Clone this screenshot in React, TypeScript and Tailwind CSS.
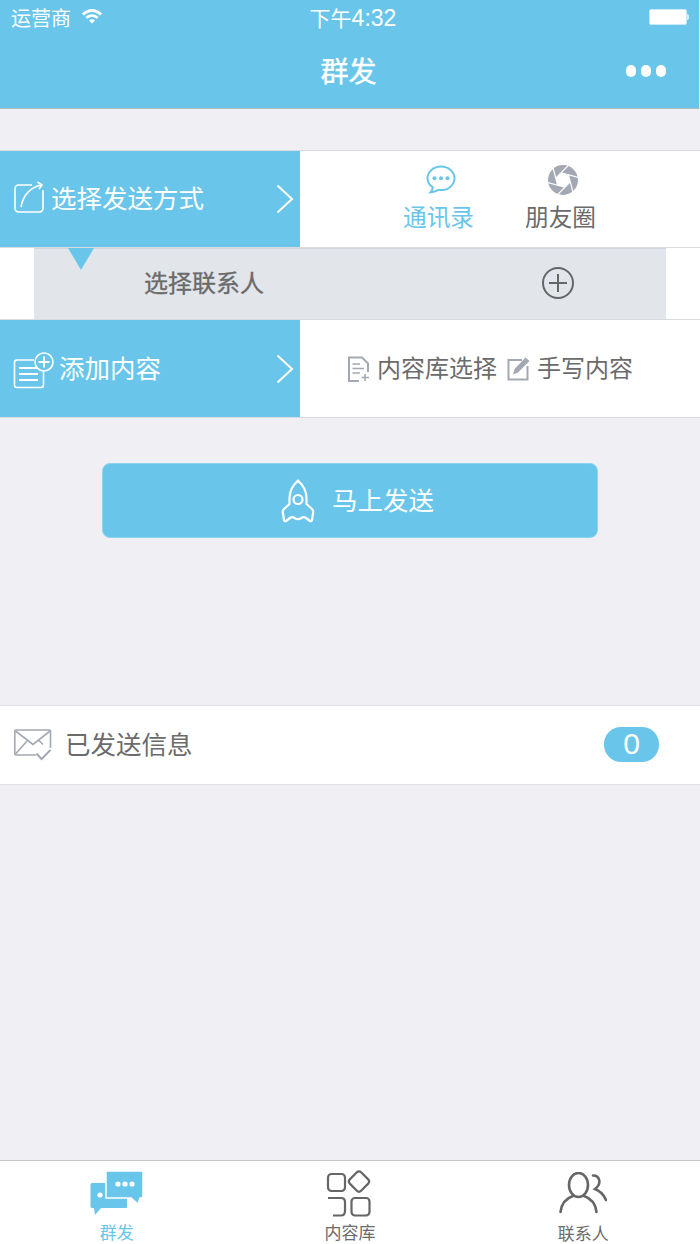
import React from 'react';

const Chevron: React.FC = () => (
    <svg width="18" height="30" viewBox="0 0 18 30" fill="none" stroke="#fff" strokeWidth="2">
        <path d="M1.5 1.5 L16 15 L1.5 28.5" />
    </svg>
);

// six blades: each white line runs along one side of the hexagonal hole and on past the rim
const Aperture: React.FC = () => {
    const points = [0, 1, 2, 3, 4, 5].map(i => {
        const angle = (i * 60 + 15) * Math.PI / 180;
        return [15 + 7.5 * Math.cos(angle), 15 + 7.5 * Math.sin(angle)];
    });
    return (
        <svg width="30" height="30" viewBox="0 0 30 30" className="shrink-0 ml-[5px]">
            <circle cx="15" cy="15" r="15" fill="#a3a9b3" />
            <polygon points={points.map(p => p.join(',')).join(' ')} fill="#fff" />
            {points.map((p, i) => {
                const next = points[(i + 1) % 6];
                const x2 = p[0] + (next[0] - p[0]) * 3.2;
                const y2 = p[1] + (next[1] - p[1]) * 3.2;
                return <line key={i} x1={p[0]} y1={p[1]} x2={x2} y2={y2} stroke="#fff" strokeWidth="1.2" />;
            })}
        </svg>
    );
};

const App: React.FC = () => {
    return (
        <div className="w-[700px] h-[1244px] flex flex-col bg-[#efeff4] overflow-hidden font-['Noto_Sans_CJK_SC','Liberation_Sans',sans-serif] text-[#6b6b6b]">
            {/* header */}
            <div className="h-[109px] shrink-0 bg-[#69c6ea] border-b border-r border-b-[#b4bcc2] border-r-[#dfe6ea] text-white flex flex-col">
                <div className="h-[36px] flex items-center justify-between pl-[11px] pr-[10px]">
                    <div className="w-[200px] flex items-center gap-[10px]">
                        <span className="text-[20px] leading-none mb-[1px]">运营商</span>
                        <svg width="22" height="16" viewBox="0 0 22 16" fill="#fff" className="mb-[4px]">
                            <path d="M1 5.5 C6.5 -0.5 15.5 -0.5 21 5.5 L19 7.5 C14.5 2.8 7.5 2.8 3 7.5 Z" />
                            <path d="M4.5 9 C8 5.2 14 5.2 17.5 9 L15.5 11 C13 8.4 9 8.4 6.5 11 Z" />
                            <path d="M8 12.5 C9.8 10.8 12.2 10.8 14 12.5 L11 15.5 Z" />
                        </svg>
                    </div>
                    <span className="text-[21px] leading-none ml-[6px]">下午<span className="text-[23px] font-['Liberation_Sans',sans-serif]">4:32</span></span>
                    <div className="w-[200px] flex justify-end items-center mb-[2px]">
                        <div className="w-[38px] h-[16px] bg-white rounded-[2px] border border-[#c5e9f7]" />
                        <div className="w-[2px] h-[6px] bg-white/70 rounded-r-sm" />
                    </div>
                </div>
                <div className="flex-1 flex items-center justify-between pl-[34px] pr-[33px] pb-[3px]">
                    <div className="w-[40px]" />
                    <span className="text-[28px] leading-none mb-[1px] mr-[3px] [-webkit-text-stroke:0.4px_white]">群发</span>
                    <div className="flex items-center gap-[5px]">
                        <div className="w-[10px] h-[12px] rounded-full bg-white" />
                        <div className="w-[10px] h-[12px] rounded-full bg-white" />
                        <div className="w-[10px] h-[12px] rounded-full bg-white" />
                    </div>
                </div>
            </div>

            {/* send method */}
            <div className="mt-[41px] h-[98px] shrink-0 flex bg-white border-t border-b border-[#d9dadd]">
                <div className="w-[300px] bg-[#69c6ea] flex items-center pl-[13px] pr-[6px] text-white">
                    <svg width="32" height="34" viewBox="0 0 32 34" fill="none" stroke="#fff" strokeWidth="1.6" className="shrink-0 mt-[-3px]">
                        <path d="M19 4 H6 Q2 4 2 8 V27 Q2 31 6 31 H26 Q30 31 30 27 V9" />
                        <path d="M8 26 C10 15 16 7 28 4" />
                        <path d="M24.5 1 L29 4 L26 8" />
                    </svg>
                    <span className="ml-[6px] text-[25.5px] leading-none mb-[4px] whitespace-nowrap">选择发送方式</span>
                    <div className="ml-auto"><Chevron /></div>
                </div>
                <div className="flex-1 flex pl-[103px] pt-[14px]">
                    <div className="w-[71px] shrink-0 flex flex-col items-center text-[#69c6ea]">
                        <svg width="30" height="29" viewBox="0 0 30 29" fill="none" className="shrink-0 ml-[5px]">
                            <path d="M15 1.5 C7.5 1.5 1.5 6.8 1.5 13.3 C1.5 17 3.5 20.2 6.8 22.4 C6.6 24.4 5.8 26 4.5 27.3 C8 27 10.6 26 12.6 24.9 C13.4 25 14.2 25.1 15 25.1 C22.5 25.1 28.5 19.8 28.5 13.3 C28.5 6.8 22.5 1.5 15 1.5 Z" stroke="#69c6ea" strokeWidth="2" />
                            <circle cx="8.5" cy="13.3" r="2" fill="#69c6ea" />
                            <circle cx="15" cy="13.3" r="2" fill="#69c6ea" />
                            <circle cx="21.5" cy="13.3" r="2" fill="#69c6ea" />
                        </svg>
                        <span className="mt-[7px] text-[23.7px] leading-[30px] whitespace-nowrap">通讯录</span>
                    </div>
                    <div className="ml-[51px] w-[71px] shrink-0 flex flex-col items-center">
                        <Aperture />
                        <span className="mt-[6px] text-[23.7px] leading-[30px] whitespace-nowrap">朋友圈</span>
                    </div>
                </div>
            </div>

            {/* contacts */}
            <div className="relative h-[72px] shrink-0 bg-white px-[34px] border-b border-[#d9dadd]">
                <div className="h-full bg-[#e2e5ea] flex items-center pl-[110px] border-t border-[#d3d6dc]">
                    <span className="text-[24px] leading-none mb-[4px] [-webkit-text-stroke:0.35px_#6b6b6b]">选择联系人</span>
                    <svg width="32" height="32" viewBox="0 0 32 32" fill="none" stroke="#666" strokeWidth="2" className="ml-[278px] mt-[-2px]">
                        <circle cx="16" cy="16" r="15" />
                        <path d="M16 7 V25 M7 16 H25" />
                    </svg>
                </div>
                <div className="absolute left-[68px] top-0 w-[26px] h-[22px] bg-[#69c6ea] [clip-path:polygon(0_0,100%_0,50%_100%)]" />
            </div>

            {/* content */}
            <div className="h-[98px] shrink-0 flex bg-white border-b border-[#d9dadd]">
                <div className="w-[300px] bg-[#69c6ea] flex items-center pl-[13px] pr-[6px] text-white">
                    <svg width="41" height="37" viewBox="0 0 41 37" fill="none" stroke="#fff" strokeWidth="1.6" className="shrink-0 mt-[3px]">
                        <path d="M21 8 H4 Q1.5 8 1.5 10.5 V33 Q1.5 35.5 4 35.5 H28 Q30.5 35.5 30.5 33 V19" />
                        <path d="M6 16 H24 M6 22 H25 M6 28 H25" strokeWidth="2" />
                        <circle cx="31" cy="10" r="9" />
                        <path d="M31 4.5 V15.5 M25.5 10 H36.5" strokeWidth="2" />
                    </svg>
                    <span className="ml-[5px] text-[25.5px] leading-none mb-[4px] whitespace-nowrap">添加内容</span>
                    <div className="ml-auto"><Chevron /></div>
                </div>
                <div className="flex-1 flex items-center pl-[47px]">
                    <svg width="23" height="26" viewBox="0 0 23 26" fill="none" stroke="#a3a9b3" strokeWidth="2" className="shrink-0">
                        <path d="M12 25 H2 V1.5 H15 L21 7.5 V16" />
                        <path d="M5.5 8 H13 M5.5 12.5 H17 M5.5 17 H13" strokeWidth="1.6" />
                        <path d="M18 18 V25 M14.5 21.5 H22" strokeWidth="1.6" />
                    </svg>
                    <span className="ml-[7px] text-[24px] leading-none mb-[4px] whitespace-nowrap">内容库选择</span>
                    <svg width="23" height="24" viewBox="0 0 23 24" fill="none" className="ml-[10px] shrink-0">
                        <path d="M15 3 H1.5 V22.5 H20.5 V9" stroke="#a3a9b3" strokeWidth="2" />
                        <path d="M18.5 0.5 L22.5 4 L11 15.5 L6 17.5 L7.5 12 Z" fill="#a3a9b3" />
                    </svg>
                    <span className="ml-[7px] text-[24px] leading-none mb-[4px] whitespace-nowrap">手写内容</span>
                </div>
            </div>

            {/* send button */}
            <div className="mt-[45px] mx-[102px] h-[75px] shrink-0 rounded-[8px] bg-[#69c6ea] border border-[#8fd4ef] flex items-center justify-center text-white">
                <svg width="34" height="44" viewBox="0 0 34 44" fill="none" stroke="#fff" strokeWidth="2.2" strokeLinejoin="round" className="mr-[17px] ml-[15px]">
                    <path d="M17 1.5 C23 7 25.5 13 25.5 19 V25 L31 30 C32 31 32.5 32 32.2 33.5 L31 41 C30.8 42.3 29.8 42.5 29 42 L25 39 C23 37.6 22 38 20.5 39 C18.5 40.2 15.5 40.2 13.5 39 C12 38 11 37.6 9 39 L5 42 C4.2 42.5 3.2 42.3 3 41 L1.8 33.5 C1.5 32 2 31 3 30 L8.5 25 V19 C8.5 13 11 7 17 1.5 Z" />
                    <circle cx="17" cy="20.5" r="4.5" />
                </svg>
                <span className="text-[25.5px] leading-none mb-[4px]">马上发送</span>
            </div>

            {/* sent messages */}
            <div className="mt-[167px] h-[80px] shrink-0 bg-white border-t border-b border-[#e2e2e6] flex items-center pl-[14px]">
                <svg width="38" height="32" viewBox="0 0 38 32" fill="none" stroke="#a3a9b3" strokeWidth="1.6" className="shrink-0">
                    <path d="M22 26 H2 Q0.8 26 0.8 25 V2 Q0.8 1 2 1 H35.5 Q36.5 1 36.5 2 V19" />
                    <path d="M1.5 2 L19 15.5 L36 2 M1.5 25 L13.5 11.5 M25 11.5 L29 15.5" />
                    <path d="M22.5 24.5 L27.5 30 L36.5 21" strokeWidth="2" />
                </svg>
                <span className="ml-[13px] text-[25.5px] leading-none mb-[4px] whitespace-nowrap">已发送信息</span>
                <div className="ml-[411px] mb-[2px] w-[55px] h-[35px] rounded-[17px] bg-[#69c6ea] text-white flex items-center justify-center pl-[1px] text-[30px] leading-none font-['Liberation_Sans',sans-serif]">0</div>
            </div>

            <div className="flex-1" />

            {/* tab bar */}
            <div className="h-[84px] shrink-0 bg-white border-t border-[#c6c6c9] grid grid-cols-3 text-[17px]">
                <div className="flex flex-col items-center text-[#69c6ea] pt-[9px]">
                    <svg width="53" height="47" viewBox="0 0 53 47" className="shrink-0">
                        <path d="M2 13 H36 Q37 13 37 14 V37 Q37 38 36 38 H11 L5 45 L4 38 H2 Q0.5 38 0.5 36.5 V14.5 Q0.5 13 2 13 Z" fill="#69c6ea" />
                        <path d="M16 1 H52 Q53 1 53 2 V27 Q53 28 52 28 H50 L48 34 L41 28 H16 Z" fill="#69c6ea" stroke="#fff" strokeWidth="1.5" />
                        <circle cx="10" cy="25" r="2.6" fill="#fff" />
                        <circle cx="28" cy="14" r="2.6" fill="#fff" />
                        <circle cx="35" cy="14" r="2.6" fill="#fff" />
                        <circle cx="42" cy="14" r="2.6" fill="#fff" />
                    </svg>
                    <span className="leading-[20px] mt-[5px]">群发</span>
                </div>
                <div className="flex flex-col items-center pt-[9px]">
                    <svg width="47" height="47" viewBox="0 0 47 47" fill="none" stroke="#666" strokeWidth="2.2" className="shrink-0 ml-[-1px]">
                        <rect x="2" y="4" width="17" height="17" rx="3.5" />
                        <rect x="25" y="3.5" width="16" height="16" rx="3" transform="rotate(45 33 11.5)" />
                        <rect x="25.5" y="28" width="18" height="17.5" rx="3.5" />
                        <path d="M2 28 H15 Q19 28 19 32 V41 Q19 45.5 15 45.5 H7" />
                    </svg>
                    <span className="leading-[20px] mt-[5px]">内容库</span>
                </div>
                <div className="flex flex-col items-center pt-[11px]">
                    <svg width="48" height="42" viewBox="0 0 48 42" fill="none" stroke="#666" strokeWidth="2.6" strokeLinecap="round" className="shrink-0 ml-[-1px]">
                        <ellipse cx="19.5" cy="13" rx="9.5" ry="12" />
                        <path d="M1.5 40 C2.5 31 8 26 14 24 M37.5 40 C36.5 31 31 26 25 24" />
                        <path d="M34 3.5 C41 3.5 43 12 36 17 C41 19 45 23 47 28" />
                    </svg>
                    <span className="leading-[20px] mt-[9px]">联系人</span>
                </div>
            </div>
        </div>
    );
};

export default App;
